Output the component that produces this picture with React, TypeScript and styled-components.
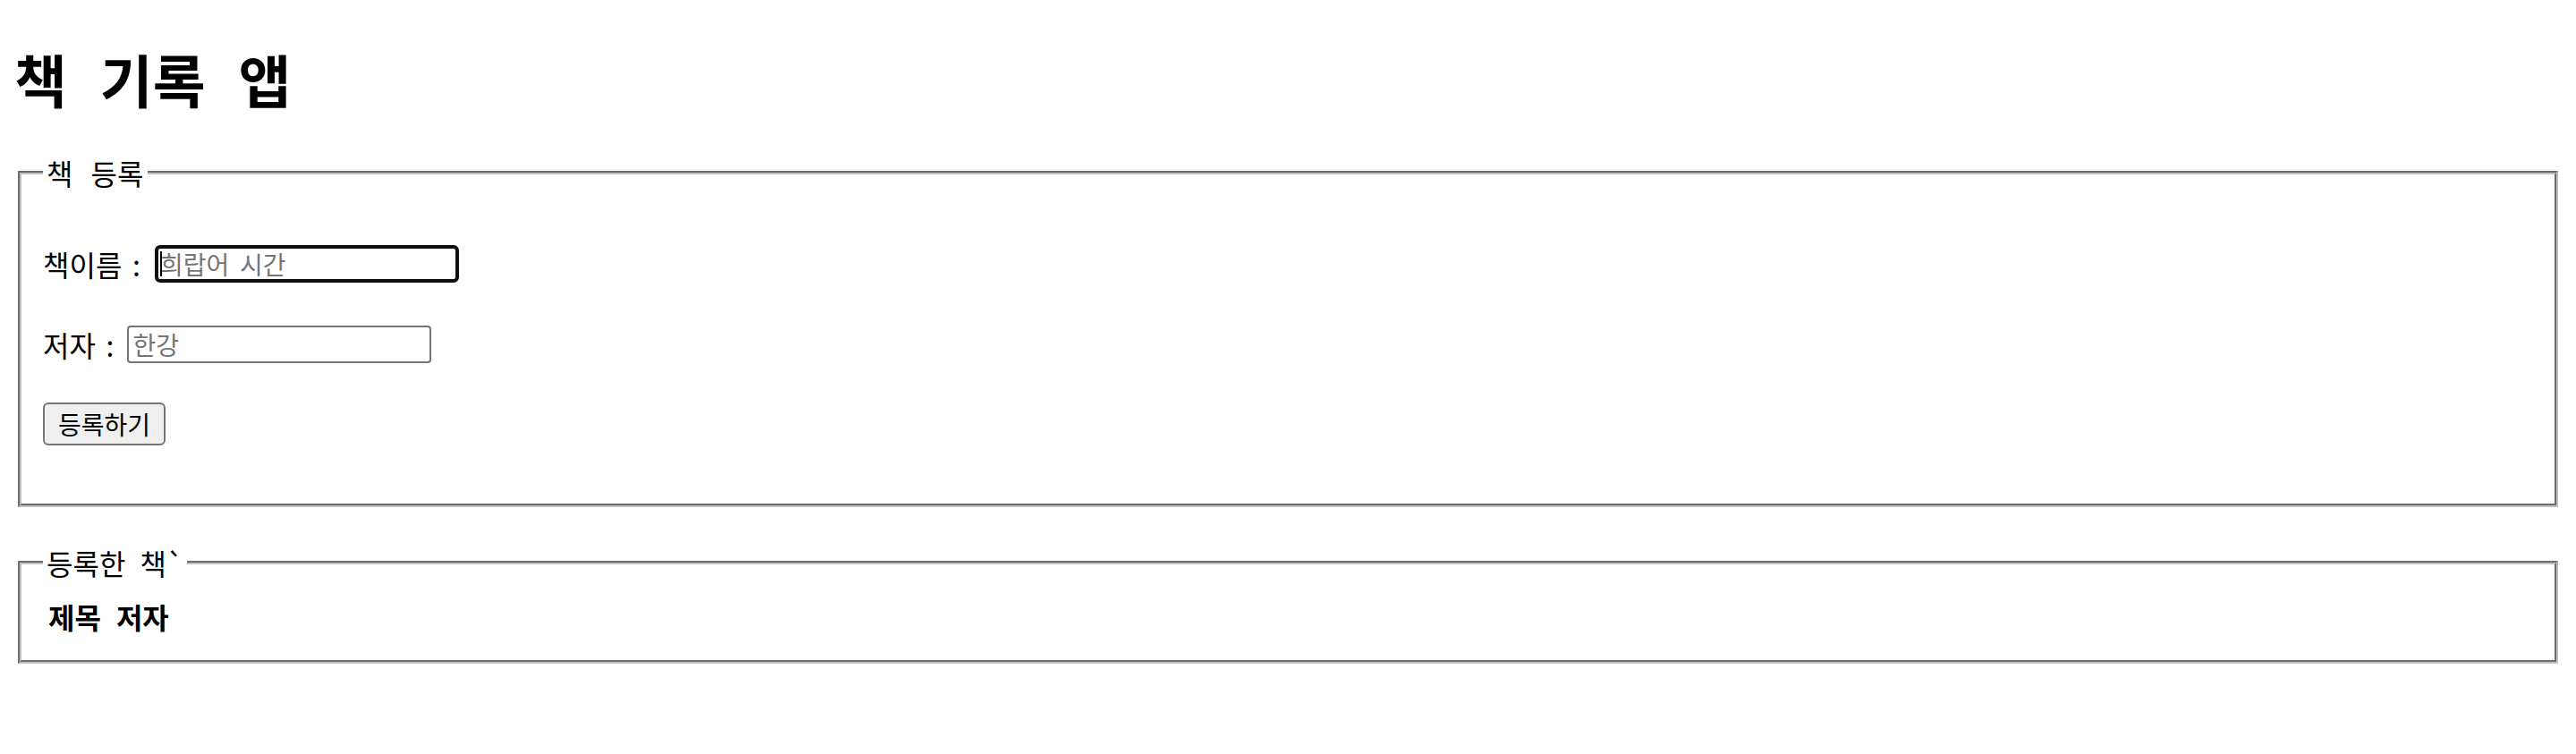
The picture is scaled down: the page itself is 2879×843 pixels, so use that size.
import React from "react";
import styled, { createGlobalStyle } from "styled-components";

const GlobalStyle = createGlobalStyle`
  html, body {
    margin: 0;
    padding: 0;
    background: #ffffff;
  }
  body {
    font-family: "Noto Sans CJK KR", "Noto Sans", sans-serif;
    color: #000000;
    word-spacing: 0.28em;
  }
`;

const Page = styled.div`
  padding: 0 16px 40px;
`;

const Title = styled.h1`
  margin: 55px 0 0;
  font-size: 64px;
  line-height: 64px;
  font-weight: 700;
  word-spacing: 0.35em;
`;

const Box = styled.fieldset<{ $top: number }>`
  margin: ${(p) => p.$top}px 4px 0;
  padding: 11px 24px 20px;
  border: 4px groove rgb(192, 192, 192);
  min-inline-size: min-content;
`;

const Legend = styled.legend<{ $spacing?: number }>`
  padding: 0 4px;
  font-size: 32px;
  line-height: 40px;
  word-spacing: ${(p) => p.$spacing ?? 9}px;
`;

const Form = styled.form`
  display: flex;
  flex-direction: column;
  align-items: flex-start;
  gap: 32px;
  padding: 42px 0 45px;
`;

const Row = styled.label<{ $gap: number }>`
  display: flex;
  align-items: center;
  gap: ${(p) => p.$gap}px;
  height: 58px;
  font-size: 32px;
`;

const Field = styled.span`
  position: relative;
  display: inline-flex;
`;

const Input = styled.input<{ $focused?: boolean }>`
  box-sizing: border-box;
  width: 340px;
  height: 42px;
  padding: ${(p) => (p.$focused ? "0 2px" : "2px 4px")};
  border: ${(p) => (p.$focused ? "4px solid #101010" : "2px solid #767676")};
  border-radius: ${(p) => (p.$focused ? "6px" : "4px")};
  font-family: inherit;
  font-size: 28px;
  word-spacing: 0.2em;
  color: #000000;
  background: #ffffff;
  outline: none;

  &::placeholder {
    color: #757575;
  }
`;

const Caret = styled.span`
  position: absolute;
  left: 6px;
  top: 7px;
  width: 2px;
  height: 28px;
  background: #000000;
`;

const Button = styled.button`
  box-sizing: border-box;
  height: 48px;
  margin-top: 4px;
  padding: 2px 15px;
  border: 2px solid #767676;
  border-radius: 6px;
  background: #efefef;
  font-family: inherit;
  font-size: 28px;
  color: #000000;
`;

const Table = styled.table`
  border-spacing: 4px;
`;

const Head = styled.th`
  padding: 2px 11px 2px 2px;
  font-size: 32px;
  line-height: 46px;
  font-weight: 700;

  &:last-child {
    padding-right: 2px;
  }
`;

export default function App() {
  return (
    <>
      <GlobalStyle />
      <Page>
        <Title>책 기록 앱</Title>

        <Box $top={54}>
          <Legend $spacing={13}>책 등록</Legend>
          <Form onSubmit={(e) => e.preventDefault()}>
            <Row $gap={16}>
              책이름 :
              <Field>
                <Input $focused placeholder="희랍어 시간" />
                <Caret />
              </Field>
            </Row>
            <Row $gap={15}>
              저자 :
              <Field>
                <Input placeholder="한강" />
              </Field>
            </Row>
            <Button type="submit">등록하기</Button>
          </Form>
        </Box>

        <Box $top={42}>
          <Legend>등록한 책`</Legend>
          <Table>
            <thead>
              <tr>
                <Head>제목</Head>
                <Head>저자</Head>
              </tr>
            </thead>
          </Table>
        </Box>
      </Page>
    </>
  );
}
